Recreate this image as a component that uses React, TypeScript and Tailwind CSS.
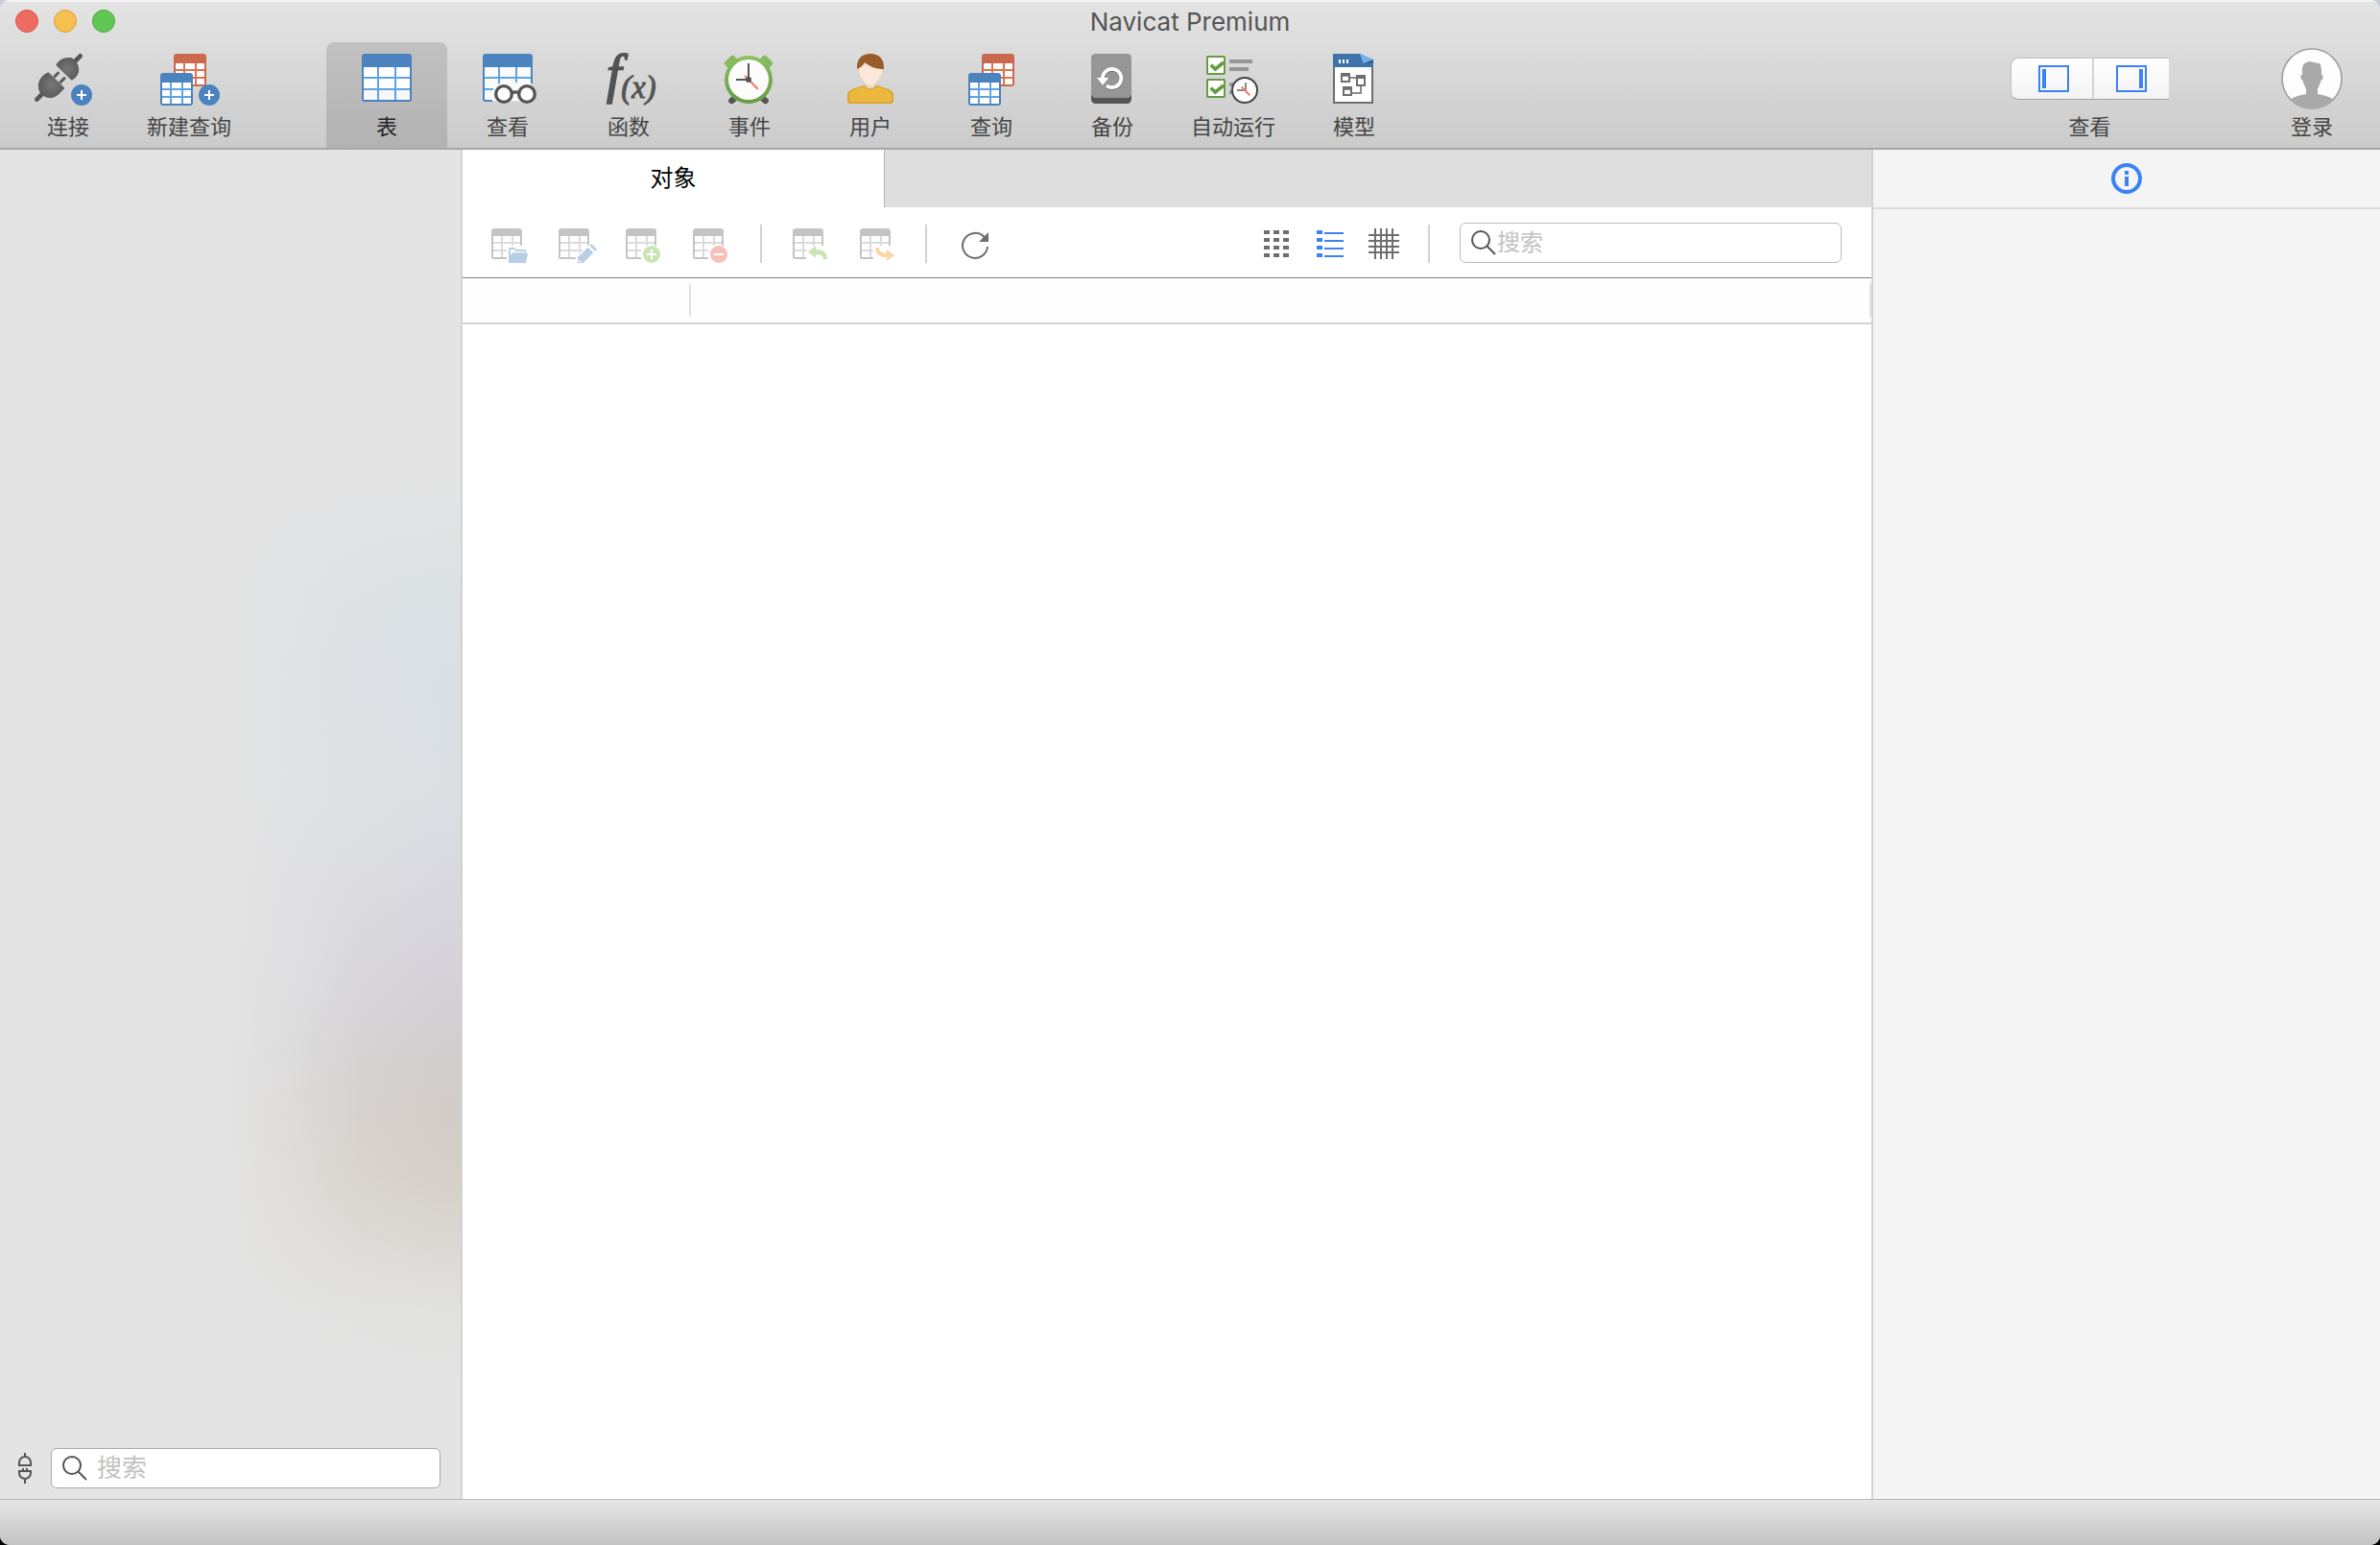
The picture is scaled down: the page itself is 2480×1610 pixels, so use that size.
import type { ReactNode } from "react";

const CJK = "font-['Inter','Noto_Sans_CJK_SC',sans-serif]";

function Svg({ children }: { children: ReactNode }) {
  return (
    <svg viewBox="0 0 210 168" className="h-14 w-[70px] shrink-0 overflow-visible" aria-hidden>
      {children}
    </svg>
  );
}

function PlusBadge({ cx, cy }: { cx: number; cy: number }) {
  return (
    <>
      <circle cx={cx} cy={cy} r="33" fill="#4a83bd" />
      <path d={`M${cx - 15} ${cy}h30M${cx} ${cy - 15}v30`} stroke="#fff" strokeWidth="6" />
    </>
  );
}

function MiniTable({ x, y, frame, line }: { x: number; y: number; frame: string; line: string }) {
  return (
    <g transform={`translate(${x} ${y})`}>
      <rect width="102" height="102" rx="9" fill={frame} />
      <rect x="6" y="30" width="90" height="66" fill={line} />
      {[30, 54, 78].map((cy) => (
        <path key={cy} d={`M6 ${cy}h24v18h-24zM36 ${cy}h30v18h-30zM72 ${cy}h24v18h-24z`} fill="#fff" />
      ))}
    </g>
  );
}

function ConnectIcon() {
  return (
    <Svg>
      <defs>
        <radialGradient id="plug">
          <stop offset="0" stopColor="#777" />
          <stop offset="1" stopColor="#5c5c5c" />
        </radialGradient>
      </defs>
      <path d="M122 28L143 7M7 143L28 122" stroke="#555" strokeWidth="14" strokeLinecap="round" />
      <path d="M67 36C74 20 94 9 116 13C134 24 142 42 137 60C134 70 126 78 116 83Z" fill="url(#plug)" />
      <path d="M60 74L74 60M78 92L93 77" stroke="#5c5c5c" strokeWidth="9" strokeLinecap="round" />
      <path d="M43 58C24 66 10 84 12 104C13 124 28 137 48 138C64 138 74 130 94 107Z" fill="url(#plug)" />
      <path d="M47 59L92 103" stroke="#b5b5b5" strokeWidth="2" />
      <PlusBadge cx={147} cy={129} />
    </Svg>
  );
}

function NewQueryIcon() {
  return (
    <Svg>
      <MiniTable x={57} y={0} frame="#cb694e" line="#e2714f" />
      <MiniTable x={15} y={60} frame="#4a83bd" line="#5fa3e2" />
      <PlusBadge cx={168} cy={129} />
    </Svg>
  );
}

function QueryIcon() {
  return (
    <Svg>
      <MiniTable x={75} y={0} frame="#cb694e" line="#e2714f" />
      <MiniTable x={33} y={60} frame="#4a83bd" line="#5fa3e2" />
    </Svg>
  );
}

function TableIcon() {
  return (
    <Svg>
      <rect x="27" width="156" height="150" rx="10" fill="#4a83bd" />
      <rect x="33" y="42" width="144" height="102" fill="#5fa3e2" />
      {[42, 78, 114].map((y) => (
        <path key={y} d={`M33 ${y}h42v30h-42zM81 ${y}h48v30h-48zM135 ${y}h42v30h-42z`} fill={y === 114 ? "#f7f7f7" : "#fff"} />
      ))}
    </Svg>
  );
}

function ViewIcon() {
  return (
    <Svg>
      <mask id="glassesMask">
        <rect width="210" height="168" fill="#fff" />
        <path d="M93 90h72a36 36 0 0 1 36 36v42H57v-42a36 36 0 0 1 36-36z" fill="#000" />
      </mask>
      <rect x="30" y="40" width="150" height="108" fill="#fafafa" />
      <g mask="url(#glassesMask)">
        <path d="M37 0h136a10 10 0 0 1 10 10v32H27V10A10 10 0 0 1 37 0z" fill="#4a83bd" />
        <path d="M78 42v100M132 42v100M30 75h150M30 111h150" stroke="#5fa3e2" strokeWidth="6" />
        <path d="M30 40v102q0 5 5 5h140q5 0 5-5V40" fill="none" stroke="#4a83bd" strokeWidth="6" />
      </g>
      <g fill="#fff" stroke="#555" strokeWidth="10">
        <circle cx="93" cy="126" r="25" />
        <circle cx="165" cy="126" r="25" />
        <path d="M118 122q11-5 22 0" />
      </g>
    </Svg>
  );
}

function FunctionIcon() {
  return (
    <Svg>
      <g fill="#545454" stroke="#545454" className="font-['Liberation_Serif',serif] italic">
        <text x="36" y="121" fontSize="168" strokeWidth="5">f</text>
        <text x="82" y="138" fontSize="98" strokeWidth="3">(x)</text>
      </g>
    </Svg>
  );
}

function EventIcon() {
  return (
    <Svg>
      <defs>
        <linearGradient id="clockRing" x1="0" y1="0" x2="0" y2="1">
          <stop offset="0" stopColor="#8cc063" />
          <stop offset="1" stopColor="#689b43" />
        </linearGradient>
      </defs>
      <path d="M62 136L49 147M142 136L155 147" stroke="#555" strokeWidth="19" strokeLinecap="round" />
      <rect x="27" y="12" width="40" height="26" rx="7" fill="#86ba5d" transform="rotate(-45 47 25)" />
      <rect x="137" y="12" width="40" height="26" rx="7" fill="#86ba5d" transform="rotate(45 157 25)" />
      <circle cx="102" cy="81" r="75" fill="url(#clockRing)" />
      <circle cx="102" cy="81" r="63" fill="#fcfcfc" />
      <path d="M90 69L132 111" stroke="#f27a66" strokeWidth="6" />
      <path d="M102 30V81H63" fill="none" stroke="#555" strokeWidth="6" />
      <circle cx="102" cy="81" r="9" fill="#555" />
    </Svg>
  );
}

function UserIcon() {
  return (
    <Svg>
      <path d="M88 98C95 112 115 112 122 98C145 104 177 113 177 126V146Q177 156 167 156H43Q33 156 33 146V126C33 113 65 104 88 98Z" fill="#d9a530" />
      <path d="M86 103C95 116 115 116 124 103C146 108 171 117 171 128V144Q171 151 164 151H46Q39 151 39 144V128C39 117 64 108 86 103Z" fill="#ecb83f" />
      <path d="M90 88H120V99C114 109 96 109 90 99Z" fill="#f3dccb" />
      <path d="M67 30V50C67 70 90 101 105 101C120 101 144 70 144 50V30Z" fill="#fbe8d9" stroke="#dcc8b9" strokeWidth="2" />
      <path d="M63 48C61 14 80 0 105 0C132 0 149 16 147 48C122 48 100 40 88 26C84 34 74 44 63 48Z" fill="#995c2b" />
    </Svg>
  );
}

function BackupIcon() {
  return (
    <Svg>
      <rect x="39" y="18" width="126" height="138" rx="14" fill="#555" />
      <rect x="39" width="126" height="138" rx="14" fill="#969696" />
      <g transform="translate(0 3)" opacity="0.25">
        <path d="M75 78A29 29 0 1 1 87 100" fill="none" stroke="#000" strokeWidth="11" />
      </g>
      <path d="M75 78A29 29 0 1 1 87 100" fill="none" stroke="#fff" strokeWidth="11" />
      <path d="M57 75H94L75 98Z" fill="#fff" />
    </Svg>
  );
}

function AutomationIcon() {
  return (
    <Svg>
      <path d="M93 18h72v12h-72zM93 42h60v12h-60zM93 90h24v12h-24zM93 114h24v12h-24z" fill="#969696" />
      {[6, 78].map((y) => (
        <g key={y} transform={`translate(0 ${y})`}>
          <rect x="24" y="3" width="54" height="54" rx="2" fill="#fff" stroke="#679b43" strokeWidth="6" />
          <path d="M35 29L49 42L75 21" fill="none" stroke="#679b43" strokeWidth="11" />
        </g>
      ))}
      <circle cx="141" cy="114" r="39" fill="#fff" stroke="#444" strokeWidth="6" />
      <path d="M144 90V114H117" fill="none" stroke="#888" strokeWidth="6" />
      <path d="M131 103L157 130" stroke="#f27a66" strokeWidth="6" />
    </Svg>
  );
}

function ModelIcon() {
  return (
    <Svg>
      <rect x="42" y="38" width="120" height="115" fill="#fff" stroke="#6e6e6e" strokeWidth="6" />
      <path d="M39 0H123L165 19V42H39Z" fill="#3f73aa" />
      <path d="M123 0L165 19L134 31Z" fill="#74b0ec" />
      <path d="M134 31L165 19V28Z" fill="#2f5d8e" />
      <path d="M57 18h6v12h-6zM69 18h6v12h-6zM81 18h6v12h-6z" fill="#fff" />
      <path d="M93 75h18M99 123h27v-21" fill="none" stroke="#8c8c8c" strokeWidth="6" />
      <path d="M63 60h30v30h-30zM111 66h30v36h-30zM69 102h30v30h-30z" fill="#6e6e6e" />
      <path d="M69 71h18v13h-18zM117 78h18v18h-18zM75 113h18v13h-18z" fill="#fff" />
    </Svg>
  );
}

type ToolItem = { label: string; icon: ReactNode; active?: boolean };

const leftTools: ToolItem[] = [
  { label: "连接", icon: <ConnectIcon /> },
  { label: "新建查询", icon: <NewQueryIcon /> },
];

const objectTools: ToolItem[] = [
  { label: "表", icon: <TableIcon />, active: true },
  { label: "查看", icon: <ViewIcon /> },
  { label: "函数", icon: <FunctionIcon /> },
  { label: "事件", icon: <EventIcon /> },
  { label: "用户", icon: <UserIcon /> },
  { label: "查询", icon: <QueryIcon /> },
  { label: "备份", icon: <BackupIcon /> },
  { label: "自动运行", icon: <AutomationIcon /> },
  { label: "模型", icon: <ModelIcon /> },
];

function ToolButton({ label, icon, active }: ToolItem) {
  return (
    <button
      className={`flex h-[110px] w-[126px] shrink-0 flex-col items-center gap-1 rounded-t-lg pt-3 text-[22px] leading-8 ${
        active ? "bg-black/12 text-[#262626]" : "text-[#444]"
      }`}
    >
      {icon}
      <span>{label}</span>
    </button>
  );
}

function Avatar() {
  return (
    <svg viewBox="0 0 192 192" className="size-16" aria-hidden>
      <clipPath id="avatarClip">
        <circle cx="96" cy="96" r="94" />
      </clipPath>
      <circle cx="96" cy="96" r="93" fill="#fdfdfd" stroke="#a0a0a0" strokeWidth="5" />
      <path
        clipPath="url(#avatarClip)"
        d="M66 66C66 48 80 41 97 43C106 50 124 42 124 58C127 66 126 76 126 84L131 86L129 99L124 102C121 118 114 124 114 130V144C134 147 152 153 164 161V192H28V161C40 153 58 147 78 144V130C78 124 71 118 68 102L63 99L60 86L66 84Z"
        fill="#a9a9a9"
      />
    </svg>
  );
}

function TitleBar() {
  return (
    <header className="shrink-0 border-b-2 border-[#a6a6a6] bg-linear-to-b from-[#e4e4e4] to-[#cbcbcb] shadow-[inset_0_2px_0_#f3f3f3]">
      <div className="grid h-11 grid-cols-[1fr_auto_1fr] items-center px-4">
        <div className="flex gap-4">
          <button aria-label="关闭" className="size-6 rounded-full border border-[#d9544a] bg-[#ed6b60]" />
          <button aria-label="最小化" className="size-6 rounded-full border border-[#dba03c] bg-[#f6c050]" />
          <button aria-label="缩放" className="size-6 rounded-full border border-[#4aa73c] bg-[#62c655]" />
        </div>
        <h1 className="pt-0.5 text-[26px] leading-8 text-[#555]">Navicat Premium</h1>
      </div>
      <div className="flex pr-[39px] pl-2">
        {leftTools.map((t) => (
          <ToolButton key={t.label} {...t} />
        ))}
        <div className="ml-20 flex">
          {objectTools.map((t) => (
            <ToolButton key={t.label} {...t} />
          ))}
        </div>
        <div className="ml-auto flex flex-col items-center gap-3 pt-4 text-[22px] leading-8 text-[#444]">
          <div className="flex h-11 w-[165px] rounded-l-lg border border-r-0 border-[#c0c0c0] border-b-[#a3a3a3] bg-linear-to-b from-white to-[#f3f3f3]">
            <button aria-label="左侧面板" className="flex w-[86px] items-center justify-center border-r-2 border-[#d4d4d4] pl-1">
              <svg viewBox="0 0 32 28" className="h-7 w-8" aria-hidden>
                <rect x="1" y="1" width="30" height="26" fill="none" stroke="#3b82f7" strokeWidth="2" />
                <rect x="4" y="4" width="4" height="20" fill="#3b82f7" />
              </svg>
            </button>
            <button aria-label="右侧面板" className="flex flex-1 items-center justify-center">
              <svg viewBox="0 0 32 28" className="h-7 w-8" aria-hidden>
                <rect x="1" y="1" width="30" height="26" fill="none" stroke="#3b82f7" strokeWidth="2" />
                <rect x="24" y="4" width="4" height="20" fill="#3b82f7" />
              </svg>
            </button>
          </div>
          <span>查看</span>
        </div>
        <button className="ml-[117px] flex flex-col items-center gap-0.5 pt-1.5 text-[22px] leading-8 text-[#444]">
          <Avatar />
          <span>登录</span>
        </button>
      </div>
    </header>
  );
}

function Magnifier() {
  return (
    <svg viewBox="0 0 26 26" className="size-[26px] shrink-0" fill="none" stroke="#555" strokeWidth="2" aria-hidden>
      <circle cx="10" cy="10" r="9" />
      <path d="M16.500 16.500L25 25" />
    </svg>
  );
}

function Sidebar() {
  return (
    <aside className="flex w-[482px] shrink-0 flex-col justify-end border-r-2 border-[#d2d2d2] bg-[linear-gradient(to_right,#e4e4e4_44%,rgba(228,228,228,0.92)_52%,rgba(228,228,228,0.7)_61%,rgba(228,228,228,0.25)_78%,rgba(228,228,228,0)_96%),linear-gradient(to_bottom,#e4e4e4_0px,#e4e4e4_340px,#e1e3e5_390px,#dce1e4_460px,#dadfe4_540px,#dbdfe2_670px,#d9d9df_760px,#d5d3d9_850px,#d0cdcd_950px,#d2ccc8_1010px,#d5cfc8_1070px,#dad7d2_1130px,#e1e1e0_1210px,#e4e4e4_1300px)]">
      <div className="flex items-center gap-5 pb-[11px] pl-[19px]">
        <button aria-label="连接状态">
          <svg viewBox="0 0 14 32" className="h-8 w-3.5" fill="none" stroke="#555" strokeWidth="2" aria-hidden>
            <path d="M7 0V5M1 13V10A6 6 0 0 1 13 10V13ZM0 19H14M1 19V21A6 6 0 0 0 13 21V19M5 16V19M9 16V19M7 27V32" />
          </svg>
        </button>
        <label className="flex h-[42px] w-[406px] items-center rounded-md border border-[#aaa] bg-white pl-[11px]">
          <Magnifier />
          <input
            type="text"
            aria-label="搜索连接"
            placeholder="搜索"
            className="ml-2.5 min-w-0 flex-1 bg-transparent text-[26px] leading-8 outline-none placeholder:text-[#c2c2c2]"
          />
        </label>
      </div>
    </aside>
  );
}

// Greyed-out table glyph; `cut` is the part left visible beside the badge.
function SmallTable({ id, cut = "M0 0H100V54H48V96H0Z", children }: { id: string; cut?: string; children: ReactNode }) {
  return (
    <svg viewBox="0 0 120 108" className="h-9 w-10" aria-hidden>
      <clipPath id={id}>
        <path d={cut} />
      </clipPath>
      <g clipPath={`url(#${id})`}>
        <path d="M33 24V92M66 24V92M4 45H92M4 69H92" stroke="#dcdcdc" strokeWidth="6" />
        <path d="M10 0H86A10 10 0 0 1 96 10V24H0V10A10 10 0 0 1 10 0Z" fill="#c4c4c4" />
        <path d="M3 20V90Q3 93 6 93H90Q93 93 93 90V20" fill="none" stroke="#c4c4c4" strokeWidth="6" />
      </g>
      {children}
    </svg>
  );
}

const editActions = [
  {
    label: "打开表",
    icon: (
      <SmallTable id="cutOpen">
        <path d="M54 108V64Q54 60 58 60H72L78 66H108V78H114L107 108Z" fill="#b7cee5" />
        <path d="M60 88V66H70L76 72H104V76H66Z" fill="#fff" />
        <path d="M64 78H114L107 108H54V100Z" fill="#b7cee5" />
      </SmallTable>
    ),
  },
  {
    label: "设计表",
    icon: (
      <SmallTable id="cutDesign" cut="M0 0H100V46L54 90V96H0Z">
        <path d="M60 108V91L92 59L109 76L77 108Z" fill="#b7cee5" />
        <path d="M97 54L103 48L120 65L114 71Z" fill="#b7cee5" />
        <path d="M66 96V102H72L74 104L68 106H64V96Z" fill="#fff" />
      </SmallTable>
    ),
  },
  {
    label: "新建表",
    icon: (
      <SmallTable id="cutNew">
        <circle cx="81" cy="81" r="27" fill="#cae5b2" />
        <path d="M66 81H96M81 66V96" stroke="#fff" strokeWidth="6" />
      </SmallTable>
    ),
  },
  {
    label: "删除表",
    icon: (
      <SmallTable id="cutDelete">
        <circle cx="81" cy="81" r="27" fill="#f5bfba" />
        <path d="M66 81H96" stroke="#fff" strokeWidth="6" />
      </SmallTable>
    ),
  },
];

const transferActions = [
  {
    label: "导入向导",
    icon: (
      <SmallTable id="cutImport" cut="M0 0H100V54H60L42 70V96H0Z">
        <path d="M48 73L72 54V65C96 65 108 77 108 96H96C95 86 88 82 72 82V92Z" fill="#cae5b2" />
      </SmallTable>
    ),
  },
  {
    label: "导出向导",
    icon: (
      <SmallTable id="cutExport" cut="M0 0H100V54H42V96H0Z">
        <path d="M48 60H60C60 71 68 77 84 77V65L108 84L84 102V91C62 91 48 80 48 60Z" fill="#fad6ab" />
      </SmallTable>
    ),
  },
];

function Divider() {
  return <div className="h-10 w-0.5 shrink-0 bg-[#d2d2d2]" />;
}

function ObjectToolbar() {
  return (
    <div className="flex h-[74px] shrink-0 items-end border-b border-[#7f7f7f] pr-[31px] pb-[15px] pl-[30px]">
      <div className="flex gap-[30px]">
        {editActions.map((a) => (
          <button key={a.label} aria-label={a.label} disabled>
            {a.icon}
          </button>
        ))}
      </div>
      <div className="mr-8 ml-[30px]">
        <Divider />
      </div>
      <div className="flex gap-[30px]">
        {transferActions.map((a) => (
          <button key={a.label} aria-label={a.label} disabled>
            {a.icon}
          </button>
        ))}
      </div>
      <div className="mr-[35px] ml-7">
        <Divider />
      </div>
      <button aria-label="刷新">
        <svg viewBox="0 0 30 33" className="h-[33px] w-[30px]" aria-hidden>
          <path d="M25 6.500A13 13 0 1 0 28 16" fill="none" stroke="#6e6e6e" strokeWidth="2" />
          <path d="M29 1V11H19Z" fill="#6e6e6e" />
        </svg>
      </button>
      <div className="ml-auto flex items-center gap-[26px]">
        <button aria-label="图标视图">
          <svg viewBox="0 0 30 36" className="h-9 w-[30px]" fill="#6e6e6e" aria-hidden>
            {[2, 10, 18, 26].map((y) => (
              <path key={y} d={`M1 ${y}h6v4h-6zM11 ${y}h6v4h-6zM21 ${y}h6v4h-6z`} />
            ))}
          </svg>
        </button>
        <button aria-label="列表视图">
          <svg viewBox="0 0 28 36" className="h-9 w-7" fill="#3b82f7" aria-hidden>
            {[2, 10, 18, 26].map((y) => (
              <path key={y} d={`M0 ${y}h6v4h-6zM8 ${y + 2}h20v2h-20z`} />
            ))}
          </svg>
        </button>
        <button aria-label="网格视图">
          <svg viewBox="0 0 32 36" className="h-9 w-8" stroke="#6e6e6e" strokeWidth="2" aria-hidden>
            <path d="M7 0V32M13 0V32M19 0V32M25 0V32M0 7H32M0 13H32M0 19H32M0 25H32" />
          </svg>
        </button>
      </div>
      <div className="mr-[31px] ml-[30px]">
        <Divider />
      </div>
      <label className="flex h-[42px] w-[398px] items-center rounded-md border border-[#bdbdbd] bg-white pl-[11px]">
        <Magnifier />
        <input
          type="text"
          aria-label="搜索对象"
          placeholder="搜索"
          className="ml-px min-w-0 flex-1 bg-transparent text-[24px] leading-8 outline-none placeholder:text-[#c2c2c2]"
        />
      </label>
    </div>
  );
}

function ObjectPane() {
  return (
    <main className="flex min-w-0 flex-1 flex-col bg-white">
      <div role="tablist" className="flex h-[60px] shrink-0 bg-[#dedede]">
        <button role="tab" aria-selected className="w-[440px] border-r border-[#b4b4b4] bg-white text-[24px] leading-8 text-black">
          对象
        </button>
      </div>
      <ObjectToolbar />
      <div className="flex h-12 shrink-0 items-center border-b-2 border-[#d6d6d6] bg-[#fefefe]">
        <div className="h-[34px] w-[238px] border-r-2 border-[#e2e2e2]" />
        <div className="h-[34px] flex-1 border-r-2 border-[#e2e2e2]" />
      </div>
    </main>
  );
}

function InfoPane() {
  return (
    <aside className="w-[530px] shrink-0 border-l-2 border-[#d2d2d2] bg-[#f4f4f4]">
      <div className="flex h-[62px] items-center justify-center border-b-2 border-[#dcdcdc]">
        <button aria-label="信息">
          <svg viewBox="0 0 32 32" className="size-8" aria-hidden>
            <circle cx="16" cy="16" r="14" fill="none" stroke="#3b82f7" strokeWidth="4" />
            <path d="M14 8h4v4h-4zM14 14h4v10h-4z" fill="#3b82f7" />
          </svg>
        </button>
      </div>
    </aside>
  );
}

export default function App() {
  return (
    <div className={`min-h-screen bg-linear-to-b from-[#c9ced9] to-black ${CJK}`}>
      <div className="flex min-h-screen flex-col overflow-hidden rounded-[10px] bg-[#e4e4e4]">
        <TitleBar />
        <div className="flex flex-1">
          <Sidebar />
          <ObjectPane />
          <InfoPane />
        </div>
        <footer className="h-12 shrink-0 border-t border-[#b8b8b8] bg-linear-to-b from-[#e6e6e6] to-[#c3c3c3]" />
      </div>
    </div>
  );
}
